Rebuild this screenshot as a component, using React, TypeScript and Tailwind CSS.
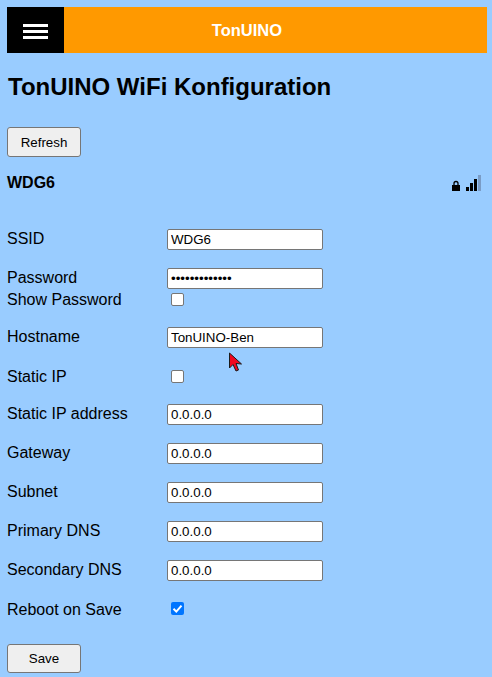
const Row = ({ label, children, className, labelClass = "mb-[2px]" }: { label: string; children: React.ReactNode; className: string; labelClass?: string }) => {
  return (
    <div className={`flex items-center ${className}`}>
      <label className={`w-[160px] text-[16px] leading-[18px] text-black ${labelClass}`}>{label}</label>
      {children}
    </div>
  );
};

const TextField = ({ value, type = "text" }: { value: string; type?: string }) => {
  return (
    <input
      type={type}
      defaultValue={value}
      className="w-[156px] h-[21px] bg-white border border-[#767676] rounded-[2px] px-[3px] text-[13.33px] text-black outline-none font-['Liberation_Sans',Arial,sans-serif]"
    />
  );
};

const Check = ({ checked = false }: { checked?: boolean }) => {
  return checked ? (
    <span className="ml-[4px] w-[13px] h-[13px] rounded-[2px] bg-[#0075ff] flex items-center justify-center">
      <svg viewBox="0 0 13 13" className="w-[13px] h-[13px]">
        <path d="M2.5 6.8 L5.3 9.6 L10.5 3.6" fill="none" stroke="white" strokeWidth="2" />
      </svg>
    </span>
  ) : (
    <span className="ml-[4px] w-[13px] h-[13px] rounded-[2px] bg-white border border-[#767676]" />
  );
};

const Button = ({ label, className }: { label: string; className: string }) => {
  return (
    <button className={`block w-[74px] bg-[#efefef] border border-[#767676] rounded-[3px] text-[13.33px] text-black font-['Liberation_Sans',Arial,sans-serif] ${className}`}>
      {label}
    </button>
  );
};

const App = () => {
  return (
    <div className="relative w-[492px] h-[677px] overflow-hidden bg-[#99ccff] font-['Liberation_Sans',Arial,sans-serif] px-[7px] pt-[7px]">
      <div className="flex w-[480px] h-[46px]">
        <div className="w-[57px] pt-[3px] bg-black flex flex-col items-center justify-center gap-[3px]">
          <div className="w-[25px] h-[3px] bg-white" />
          <div className="w-[25px] h-[3px] bg-white" />
          <div className="w-[25px] h-[3px] bg-white" />
        </div>
        <div className="flex-1 bg-[#ff9900] flex items-center justify-center pr-[57px] text-white font-bold text-[16.5px]">
          TonUINO
        </div>
      </div>

      <h1 className="mt-[20px] ml-[1px] text-[24px] leading-[28px] font-bold text-black">TonUINO WiFi Konfiguration</h1>

      <div className="mt-[26px]">
        <Button label="Refresh" className="h-[30px] pt-[1px]" />
      </div>

      <div className="mt-[17px] flex items-center justify-between h-[18px]">
        <span className="text-[16px] leading-[18px] font-bold text-black">WDG6</span>
        <svg viewBox="0 0 29 16" className="w-[29px] h-[16px] mr-[4px]">
          <path d="M0 10h8v6H0z" fill="black" />
          <path d="M2 10.5V8.5a2 2 0 0 1 4 0v2" fill="none" stroke="black" strokeWidth="1.3" />
          <rect x="14" y="12" width="3" height="4" fill="black" />
          <rect x="18" y="8" width="3" height="8" fill="black" />
          <rect x="22" y="4" width="3" height="12" fill="black" />
          <rect x="26" y="0" width="3" height="16" fill="#7a9cc6" />
        </svg>
      </div>

      <div className="mt-[37px]">
        <Row label="SSID" className="h-[21px] mb-[18px]">
          <TextField value="WDG6" />
        </Row>
        <Row label="Password" className="h-[21px]">
          <TextField value="1234567890123" type="password" />
        </Row>
        <Row label="Show Password" className="h-[20px] mb-[18px]" labelClass="mt-[2px]">
          <Check />
        </Row>
        <Row label="Hostname" className="h-[21px] mb-[18px]">
          <TextField value="TonUINO-Ben" />
        </Row>
        <Row label="Static IP" className="h-[21px] mb-[17px]" labelClass="">
          <Check />
        </Row>
        <Row label="Static IP address" className="h-[21px] mb-[18px]">
          <TextField value="0.0.0.0" />
        </Row>
        <Row label="Gateway" className="h-[21px] mb-[18px]">
          <TextField value="0.0.0.0" />
        </Row>
        <Row label="Subnet" className="h-[21px] mb-[18px]">
          <TextField value="0.0.0.0" />
        </Row>
        <Row label="Primary DNS" className="h-[21px] mb-[18px]">
          <TextField value="0.0.0.0" />
        </Row>
        <Row label="Secondary DNS" className="h-[21px] mb-[17px]">
          <TextField value="0.0.0.0" />
        </Row>
        <Row label="Reboot on Save" className="h-[21px] mb-[25px]" labelClass="mt-[2px]">
          <Check checked />
        </Row>
        <Button label="Save" className="h-[29px]" />
      </div>

      {/* mouse pointer in the capture */}
      <svg viewBox="0 0 15 20" className="absolute left-[228px] top-[352px] w-[15px] h-[20px]">
        <path d="M1.5 1 L1.5 16 L5 12.5 L8 19 L10.5 18 L8 11.5 L13.5 12 Z" fill="#f0051f" stroke="#1a1a1a" strokeWidth="1" />
      </svg>
    </div>
  );
};

export default App;
